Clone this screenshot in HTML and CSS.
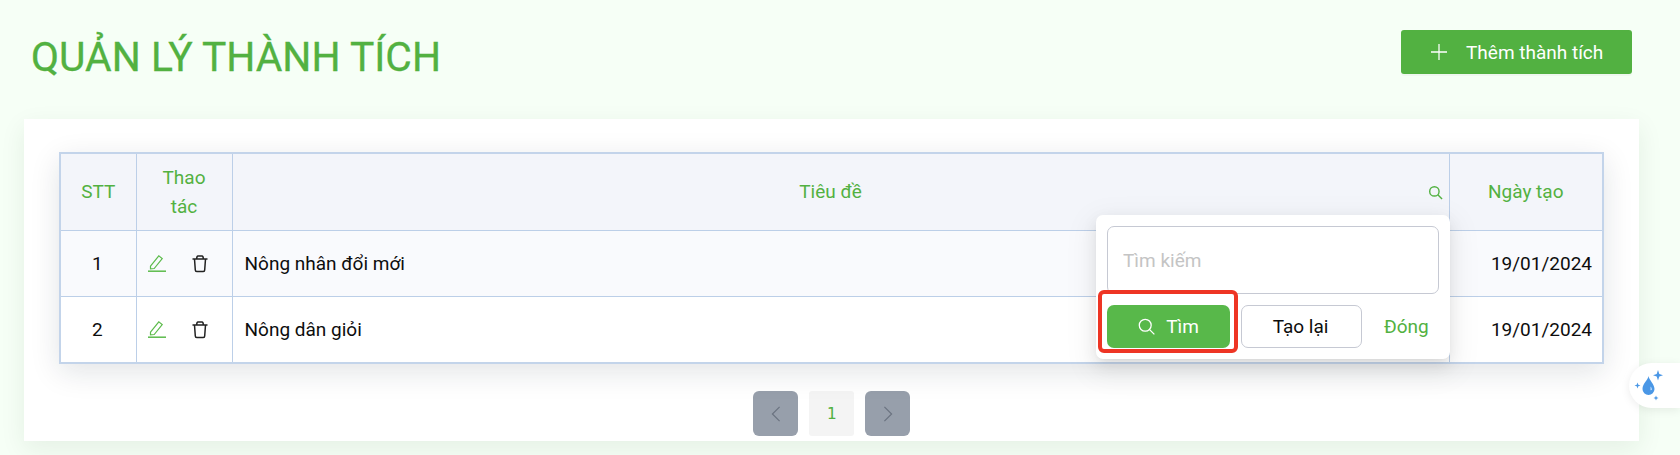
FILE: index.html
```html
<!DOCTYPE html>
<html lang="vi">
<head>
<meta charset="utf-8">
<title>Quản lý thành tích</title>
<link rel="stylesheet" href="styles.css">
</head>
<body>
<div class="page">
  <header class="page-head">
    <h1 class="title">QUẢN LÝ THÀNH TÍCH</h1>
    <button class="add-btn" type="button">
      <svg class="add-icon" viewBox="0 0 14 14"><path d="M7 0v14M0 7h14"/></svg>
      <span>Thêm thành tích</span>
    </button>
  </header>
  <main class="card">
    <div class="table-wrap">
      <table class="grid">
        <colgroup>
          <col class="c-stt"><col class="c-act"><col class="c-title"><col class="c-date">
        </colgroup>
        <thead>
          <tr>
            <th>STT</th>
            <th class="th-act">Thao<br>tác</th>
            <th class="th-title">Tiêu đề
              <svg class="th-search" viewBox="0 0 16 16"><circle cx="6.8" cy="6.8" r="5"/><path d="M10.5 10.5l4.5 4.5"/></svg>
            </th>
            <th>Ngày tạo</th>
          </tr>
        </thead>
        <tbody>
          <tr class="row-odd">
            <td class="center">1</td>
            <td>
              <div class="actions">
                <svg class="ic-edit" viewBox="0 0 18 18"><path d="M2.500 12.200 10.800 1.800l3.400 2.700-8 10-3.700.3z"/><path class="u" d="M0 17.200h18"/></svg>
                <svg class="ic-trash" viewBox="0 0 18 18"><path d="M1.500 4.500h15M3.500 4.500l.8 11a1.500 1.500 0 0 0 1.500 1.500h6.400a1.500 1.500 0 0 0 1.500-1.500l.8-11M5.500 4.500l.6-2.400a1 1 0 0 1 1-.6h3.800a1 1 0 0 1 1 .6l.6 2.400"/></svg>
              </div>
            </td>
            <td class="cell-title">Nông nhân đổi mới</td>
            <td class="cell-date">19/01/2024</td>
          </tr>
          <tr class="row-even">
            <td class="center">2</td>
            <td>
              <div class="actions">
                <svg class="ic-edit" viewBox="0 0 18 18"><path d="M2.500 12.200 10.800 1.800l3.400 2.700-8 10-3.700.3z"/><path class="u" d="M0 17.200h18"/></svg>
                <svg class="ic-trash" viewBox="0 0 18 18"><path d="M1.500 4.500h15M3.500 4.500l.8 11a1.500 1.500 0 0 0 1.500 1.500h6.400a1.500 1.500 0 0 0 1.500-1.500l.8-11M5.500 4.500l.6-2.400a1 1 0 0 1 1-.6h3.800a1 1 0 0 1 1 .6l.6 2.400"/></svg>
              </div>
            </td>
            <td class="cell-title">Nông dân giỏi</td>
            <td class="cell-date">19/01/2024</td>
          </tr>
        </tbody>
      </table>
      <div class="popup">
        <input class="search-input" type="text" placeholder="Tìm kiếm">
        <div class="popup-actions">
          <button class="btn-find" type="button">
            <svg class="find-icon" viewBox="0 0 16 16"><circle cx="6.800" cy="6.800" r="5.600"/><path d="M10.900 10.900 15.400 15.400"/></svg>
            <span>Tìm</span>
          </button>
          <button class="btn-reset" type="button">Tạo lại</button>
          <button class="btn-close" type="button">Đóng</button>
        </div>
        <div class="highlight"></div>
      </div>
    </div>
    <nav class="pager">
      <button class="pg-arrow" type="button"><svg viewBox="0 0 12 20"><path d="M10.500 1 1.500 10l9 9"/></svg></button>
      <span class="pg-num">1</span>
      <button class="pg-arrow" type="button"><svg viewBox="0 0 12 20"><path d="M1.500 1l9 9-9 9"/></svg></button>
    </nav>
  </main>
  <aside class="floater">
    <svg viewBox="0 0 32 32" class="drop-icon">
      <path class="drop" d="M14.500 7c-.5 4-6 7.500-6 13a6 6 0 0 0 12 0c0-5-5.500-9-6-13z"/>
      <path class="shine" d="M16.500 17.500c1 1 1.500 2 1.300 3.500l-1.300.3c.2-1.300 0-2.600 0-3.800z"/>
      <path class="spark" d="M24 1l1.300 4 3.700 1.200-3.700 1.300L24 11.500l-1.300-4L19 6.200l3.700-1.200z"/>
      <path class="spark" d="M3.500 13.500l.8 2.200 2.200.8-2.200.8-.8 2.200-.8-2.200-2.200-.8 2.200-.8z"/>
      <path class="spark" d="M22 26.500l.7 1.800 1.800.7-1.800.7-.7 1.800-.7-1.800-1.800-.7 1.800-.7z"/>
    </svg>
  </aside>
</div>
</body>
</html>
```
FILE: styles.css
```css
* { box-sizing: border-box; }
html, body { margin: 0; height: 455px; overflow: hidden; }
body { background: #f6fff6; font-family: Roboto, "Noto Sans", sans-serif; color: #0d0d0d; font-size: 19px; }
button, input { font-family: inherit; }
.page { position: relative; height: 455px; padding-top: 30px; }
.page-head { display: flex; justify-content: space-between; align-items: flex-start; padding: 0 48px 0 31px; height: 89px; }
.title { margin: 4px 0 0; font-size: 40.8px; line-height: 47px; font-weight: 400; color: #52b141; -webkit-text-stroke: .3px #52b141; }
.add-btn { display: flex; align-items: center; gap: 19px; width: 231px; height: 44px; padding: 0 0 0 30px; border: 0; border-radius: 3px; background: #52b141; color: #fff; font-size: 19px; box-shadow: 0 2px 1px rgba(0,0,0,.03); }
.add-icon { width: 16px; height: 16px; fill: none; stroke: #fff; stroke-width: 1.100; flex: none; }
.card { margin: 0 41px 0 24px; height: 322px; background: #fff; padding: 33px 35px 0 35px; box-shadow: 0 8px 24px rgba(30,60,30,.08); }
.table-wrap { position: relative; }
.grid { width: 100%; table-layout: fixed; border-collapse: collapse; box-shadow: 0 8px 28px rgba(20,30,50,.12); border: 2px solid #c3d4ea; }
.c-stt { width: 76px; }
.c-act { width: 96px; }
.c-date { width: 154px; }
.grid th, .grid td { border: 1px solid #bccfe8; padding: 0; }
.grid th { height: 77px; background: #f3f5fa; color: #52b141; font-weight: 400; font-size: 19px; line-height: 29px; text-align: center; }
.grid .th-title { position: relative; padding-right: 20px; }
.th-search { position: absolute; right: 6px; top: 31px; width: 15px; height: 15px; fill: none; stroke: #52b141; stroke-width: 1.500; }
.grid td { height: 66px; background: #fff; font-size: 19px; }
.grid .row-even td { height: 67px; }
.grid .row-odd td { background: #f9fafd; }
.grid .center { text-align: center; padding-right: 2px; }
.actions { display: flex; gap: 25px; align-items: center; padding-left: 11px; }
.ic-edit { width: 18px; height: 18px; fill: none; stroke: #5cbb4b; stroke-width: 1.200; }
.ic-edit .u { stroke-width: 1.500; }
.ic-trash { width: 18px; height: 19px; fill: none; stroke: #222; stroke-width: 1.500; }
.cell-title { padding-left: 12px !important; }
.cell-date { text-align: right; padding-right: 10px !important; }
.popup { position: absolute; left: 1037px; top: 63px; width: 354px; height: 144px; background: #fff; border-radius: 7px; padding: 11px; box-shadow: 0 6px 16px rgba(0,0,0,.08), 0 3px 6px -4px rgba(0,0,0,.12), 0 9px 28px 8px rgba(0,0,0,.05); }
.search-input { display: block; width: 100%; height: 68px; border: 1px solid #c6c9d3; border-radius: 7px; padding: 0 15px; font-size: 19px; outline: 0; background: #fff; }
.search-input::placeholder { color: #c4c4c4; }
.popup-actions { display: flex; align-items: center; margin-top: 11px; height: 43px; }
.btn-find { display: flex; align-items: center; justify-content: center; gap: 11px; width: 123px; height: 43px; border: 0; border-radius: 7px; background: #58b84a; color: #fff; font-size: 19px; padding: 0; }
.find-icon { width: 17px; height: 17px; fill: none; stroke: #fff; stroke-width: 1.200; }
.btn-reset { width: 121px; height: 43px; margin-left: 11px; border: 1px solid #c6c9d3; border-radius: 7px; background: #fff; color: #0d0d0d; font-size: 19px; padding: 0 2px 0 0; }
.btn-close { margin-left: 22px; border: 0; background: none; padding: 0; color: #52b141; font-size: 19px; }
.highlight { position: absolute; left: 2px; top: 75px; width: 140px; height: 63px; border: 4px solid #ee3524; border-radius: 6px; }
.pager { display: flex; justify-content: center; gap: 11px; padding: 27px 0 0 0; }
.pg-arrow { display: flex; align-items: center; justify-content: center; width: 45px; height: 45px; border: 0; border-radius: 6px; background: #979fab; padding: 0; }
.pg-arrow svg { width: 10px; height: 16px; fill: none; stroke: #6b7380; stroke-width: 1.500; }
.pg-num { display: flex; align-items: center; justify-content: center; width: 45px; height: 45px; border-radius: 3px; background: #f4f4f4; color: #52b141; font-family: "DejaVu Sans Mono", monospace; font-size: 16px; }
.floater { position: absolute; right: 0; top: 363px; width: 51px; height: 45px; background: #fff; border-radius: 23px 0 0 23px; padding: 6px 0 0 5px; box-shadow: 0 2px 10px rgba(0,0,0,.08); }
.drop-icon { display: block; width: 32px; height: 32px; }
.drop, .spark { fill: #4a97e6; }
.shine { fill: #cfe4fa; }
```
